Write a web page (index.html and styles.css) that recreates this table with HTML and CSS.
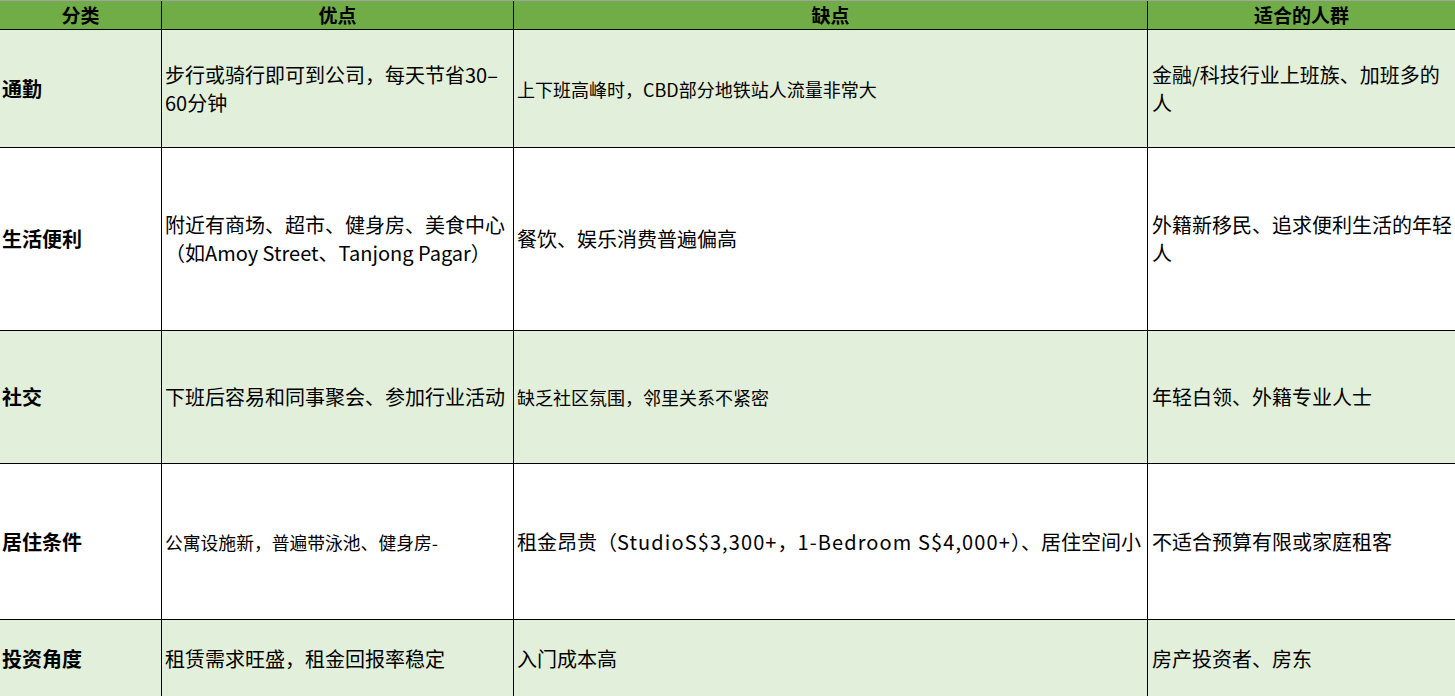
FILE: index.html
```html
<!DOCTYPE html>
<html lang="zh-CN">
<head>
<meta charset="utf-8">
<title>CBD 居住优缺点</title>
<link rel="stylesheet" href="styles.css">
</head>
<body>
<div class="sheet">
  <div class="row head">
    <div class="cell">分类</div>
    <div class="cell">优点</div>
    <div class="cell">缺点</div>
    <div class="cell last">适合的人群</div>
  </div>
  <div class="row r1 tint">
    <div class="cell cat">通勤</div>
    <div class="cell">步行或骑行即可到公司，每天节省30–<br>60分钟</div>
    <div class="cell sm">上下班高峰时，CBD部分地铁站人流量非常大</div>
    <div class="cell last">金融/科技行业上班族、加班多的<br>人</div>
  </div>
  <div class="row r2">
    <div class="cell cat">生活便利</div>
    <div class="cell">附近有商场、超市、健身房、美食中心<br>（如Amoy Street、Tanjong Pagar）</div>
    <div class="cell">餐饮、娱乐消费普遍偏高</div>
    <div class="cell last">外籍新移民、追求便利生活的年轻<br>人</div>
  </div>
  <div class="row r3 tint">
    <div class="cell cat">社交</div>
    <div class="cell">下班后容易和同事聚会、参加行业活动</div>
    <div class="cell sm">缺乏社区氛围，邻里关系不紧密</div>
    <div class="cell last">年轻白领、外籍专业人士</div>
  </div>
  <div class="row r4">
    <div class="cell cat">居住条件</div>
    <div class="cell xs">公寓设施新，普遍带泳池、健身房-</div>
    <div class="cell wide">租金昂贵（<span class="lat">StudioS$3,300+</span>，<span class="lat">1-Bedroom S$4,000+</span>）、居住空间小</div>
    <div class="cell last">不适合预算有限或家庭租客</div>
  </div>
  <div class="row r5 tint">
    <div class="cell cat">投资角度</div>
    <div class="cell">租赁需求旺盛，租金回报率稳定</div>
    <div class="cell">入门成本高</div>
    <div class="cell last">房产投资者、房东</div>
  </div>
</div>
</body>
</html>
```
FILE: styles.css
```css
* { box-sizing: border-box; }
html, body {
  margin: 0;
  padding: 0;
  background: #ffffff;
  overflow: hidden;
}
body {
  font-family: "Noto Sans CJK SC", "Noto Sans", sans-serif;
  color: #000;
  font-size: 20px;
}
.sheet {
  width: 1455px;
  height: 696px;
  border-top: 1px solid #a3a3a3;
  overflow: hidden;
}
.row {
  display: grid;
  grid-template-columns: 162px 352px 634px 307px;
  background: #ffffff;
}
.row.tint { background: #e2efda; }
.row.head {
  background: #70ad47;
  height: 29px;
}
.row.r1 { height: 118px; }
.row.r2 { height: 183px; }
.row.r3 { height: 133px; }
.row.r4 { height: 156px; }
.row.r5 { height: 120px; }
.cell {
  display: flex;
  align-items: center;
  padding: 0 0 0 3px;
  border-right: 1px solid #000;
  border-bottom: 1px solid #000;
  line-height: 28px;
  white-space: nowrap;
  overflow: hidden;
}
.cell.last { border-right: none; padding-left: 4px; }
.head .cell {
  justify-content: center;
  font-weight: bold;
  font-size: 19px;
  padding: 0;
  line-height: 28px;
}
.cat { font-weight: bold; font-size: 20px; padding-left: 2px; }
.sm { font-size: 18px; }
.xs { font-size: 17.8px; }
.wide .lat { letter-spacing: 1.1px; }
.r5 .cell { align-items: flex-start; padding-top: 25px; }
```
